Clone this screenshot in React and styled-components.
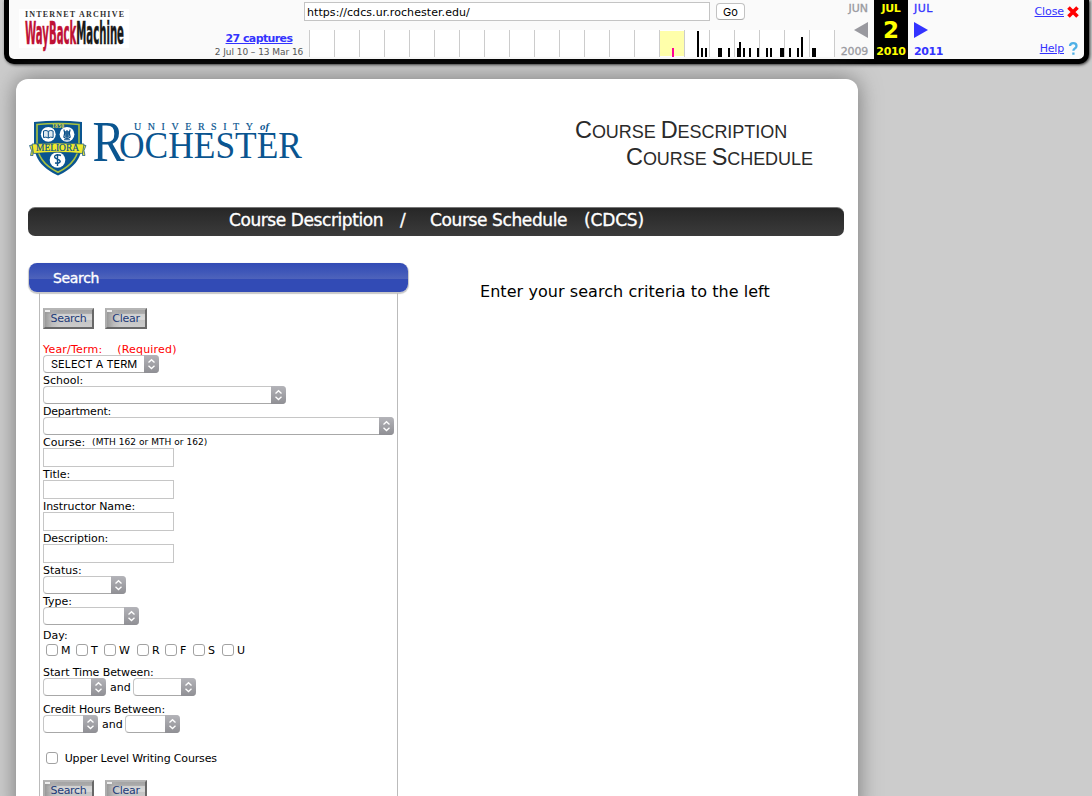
import React from "react";
import styled, { createGlobalStyle } from "styled-components";

const Global = createGlobalStyle`
  * { box-sizing: border-box; }
  html, body { margin: 0; padding: 0; }
  body { background: #ccc; width: 1092px; height: 796px; overflow: hidden; font-family: "DejaVu Sans", Verdana, sans-serif; font-size: 11px; color: #000; }
`;

const Page = styled.div`
  width: 1092px;
  height: 796px;
  overflow: hidden;
  display: flex;
  flex-direction: column;
  align-items: flex-start;
`;

const Text = styled.span`
  display: block;
  white-space: pre;
  line-height: ${(p) => p.$lh || 13}px;
  font-size: ${(p) => p.$size || 11}px;
  font-weight: ${(p) => (p.$bold ? 700 : 400)};
  color: ${(p) => p.$color || "inherit"};
  letter-spacing: ${(p) => p.$ls || 0}px;
  -webkit-text-stroke: ${(p) => p.$stroke || 0}px currentColor;
`;

const Link = styled.a`
  display: block;
  white-space: pre;
  color: #33f;
  text-decoration: underline;
  line-height: 13px;
  font-size: 11px;
  font-weight: ${(p) => (p.$bold ? 700 : 400)};
  letter-spacing: ${(p) => p.$ls || 0}px;
`;

/* ---------- archive toolbar ---------- */
const Toolbar = styled.header`
  flex: none;
  display: flex;
  align-items: flex-start;
  width: 1085px;
  height: 64px;
  margin-left: 4px;
  border: 5px solid #000;
  border-top: 0;
  border-radius: 0 0 10px 10px;
  background: #fafafa;
  box-shadow: 1px 1px 3px #333;
`;
const LogoBox = styled.div`
  width: 110px;
  height: 39px;
  margin: 9px 0 0 10px;
  background: #fff;
`;
const Captures = styled.div`
  width: 100px;
  margin: 32px 0 0 80px;
  display: flex;
  flex-direction: column;
  align-items: center;
`;
const Timeline = styled.div`
  width: 526px;
`;
const UrlRow = styled.div`
  display: flex;
  height: 30px;
  padding-top: 2px;
  margin-left: -5px;
`;
const UrlField = styled.div`
  width: 406px;
  height: 19px;
  border: 1px solid #c4c4c4;
  background: #fff;
  padding: 3px 0 0 2px;
`;
const GoButton = styled.div`
  width: 29px;
  height: 17px;
  margin: 1px 0 0 6px;
  border: 1px solid #c2c2c2;
  border-bottom-color: #aaa;
  border-radius: 4px;
  background: #fff;
  display: flex;
  justify-content: center;
  line-height: 17px;
  font-family: Inter, sans-serif;
`;
const Months = styled.div`
  display: flex;
  margin-left: 5px;
  height: 59px;
`;
const Month = styled.div`
  width: ${(p) => p.$w}px;
  height: 59px;
  padding: 2px ${(p) => p.$pr || 0}px 0 ${(p) => p.$pl || 0}px;
  display: flex;
  flex-direction: column;
  align-items: ${(p) => p.$align};
  background: ${(p) => p.$bg || "transparent"};
  color: ${(p) => p.$color};
`;
const MonthMark = styled.div`
  height: 30px;
  display: flex;
  align-items: center;
`;
const Actions = styled.div`
  width: 135px;
  height: 59px;
  padding: 5px 0 4px;
  display: flex;
  flex-direction: column;
  justify-content: space-between;
`;
const Action = styled.div`
  display: flex;
  justify-content: flex-end;
  align-items: center;
  gap: 3px;
  width: 135px;
`;

/* ---------- page panel ---------- */
const Panel = styled.main`
  flex: none;
  width: 842px;
  height: 740px;
  margin: 15px 0 0 16px;
  background: #fff;
  border-radius: 12px;
  box-shadow: 0 0 22px #777;
`;
const Banner = styled.div`
  display: flex;
  justify-content: space-between;
  height: 128px;
  padding-left: 12px;
`;
const Heading = styled.div`
  width: 283px;
  padding-top: 40px;
  font-family: "Liberation Sans", Arial, sans-serif;
  color: #2a2a2a;
`;
const HeadLine = styled.div`
  white-space: pre;
  font-size: 18px;
  line-height: 27px;
  padding-left: ${(p) => p.$x}px;
  letter-spacing: ${(p) => p.$ls}px;
`;
const Cap = styled.span`
  font-size: 23.5px;
  line-height: 20px;
`;
const TitleBar = styled.div`
  display: flex;
  width: 816px;
  height: 29px;
  margin-left: 12px;
  padding-left: 201px;
  border-top: 1px solid #777;
  border-radius: 7px;
  background: linear-gradient(#272727, #3b3b3b);
  color: #fff;
`;
const TitlePart = styled.div`
  width: ${(p) => p.$w}px;
`;
const Columns = styled.div`
  display: flex;
  margin-top: 26px;
`;
const SearchColumn = styled.section`
  width: 380px;
  margin-left: 13px;
`;
const SearchHead = styled.div`
  height: 29px;
  width: 379px;
  margin: 1px 0;
  padding: 2px 0 0 24px;
  border-radius: 8px;
  background: linear-gradient(#324bb5 0, #3f57b8 30%, #4e63bb 54%, #324bb5 55%, #324bb5 100%);
  box-shadow: 0 1px 1px 1px #c8c8c8;
`;
const Form = styled.div`
  width: 359px;
  height: 520px;
  margin: 1px 0 0 10px;
  padding: 15px 0 0 3px;
  border: solid #bbb;
  border-width: 0 1px;
`;
const Label = styled.div`
  display: flex;
  height: 13px;
  margin-top: ${(p) => p.$mt || 0}px;
  white-space: pre;
  line-height: 15px;
  letter-spacing: ${(p) => p.$ls || 0}px;
  color: ${(p) => p.$color || "#000"};
`;
const Buttons = styled.div`
  display: flex;
  gap: 11px;
  height: ${(p) => p.$h || 34}px;
`;
const BevelButton = styled.div`
  width: ${(p) => p.$w}px;
  height: 21px;
  border: 2px solid;
  border-color: #b5b5b5 #686868 #686868 #adadad;
  background:
    linear-gradient(#eee, #eee) 0 0 / 5px 2px no-repeat,
    linear-gradient(90deg, #999 0, rgba(180, 180, 180, 0.6) 7px, rgba(200, 200, 200, 0) 14px),
    linear-gradient(#a5a5a5 0, #aaa 20%, #d0d0d0 26%, #d9d9d9 55%, #c4c4c4 60%, #ccc 100%);
  color: #213a78;
  display: flex;
  justify-content: center;
  padding-top: 2px;
`;
const Row = styled.div`
  display: flex;
  align-items: center;
  height: ${(p) => p.$h}px;
  margin-top: ${(p) => p.$mt || 0}px;
  padding-left: ${(p) => p.$pl || 0}px;
`;
const And = styled.div`
  width: 27px;
  padding: 1px 0 0 4px;
  line-height: 15px;
`;
const SelectBox = styled.div`
  width: ${(p) => p.$w}px;
  height: 18px;
  border: 1px solid #c6c6c6;
  border-bottom-color: #a8a8a8;
  border-right: 0;
  border-radius: 4px;
  background: #fff;
  display: flex;
  justify-content: space-between;
  font-family: Inter, "Liberation Sans", sans-serif;
`;
const SelectValue = styled.span`
  padding-left: 7px;
  line-height: 17px;
  white-space: nowrap;
`;
const Stepper = styled.div`
  width: 15px;
  height: 18px;
  margin: -1px 0;
  border-radius: 0 4px 4px 0;
  background: linear-gradient(#b4b4b9, #8f8f94);
`;
const Field = styled.div`
  width: 131px;
  height: 19px;
  border: 1px solid #c6c6c6;
`;
const Check = styled.div`
  width: 12px;
  height: 12px;
  border: 1px solid #a2a2a2;
  border-radius: 3px;
  background: #fff;
`;
const Day = styled.div`
  display: flex;
  align-items: center;
  gap: 3px;
  width: ${(p) => p.$w}px;
`;
const Prompt = styled.div`
  padding: 20px 0 0 71px;
`;

const Select = ({ w, children }) => (
  <SelectBox $w={w}>
    <SelectValue>{children}</SelectValue>
    <Stepper>
      <svg width="15" height="18" fill="none" stroke="#fff" strokeWidth="1.3">
        <path d="M4.5 7.5 L7.5 4.7 L10.5 7.5 M4.5 10.7 L7.5 13.5 L10.5 10.7" />
      </svg>
    </Stepper>
  </SelectBox>
);

const BARS = [
  [697, 31, 2], [701, 48, 2], [705, 48, 2], [718, 48, 4], [728, 48, 2], [737, 48, 2], [739, 42, 2],
  [743, 48, 2], [749, 48, 2], [757, 48, 2], [766, 48, 2], [770, 48, 2], [780, 48, 4], [789, 48, 2],
  [797, 48, 2], [801, 37, 2], [812, 48, 4],
];

const ChartSvg = styled.svg`
  display: block;
`;

const Sparkline = () => (
  <ChartSvg width="526" height="27" viewBox="309 30 526 27" shapeRendering="crispEdges">
    <rect x="309" y="30" width="526" height="27" fill="#fff" />
    <rect x="660" y="31" width="24" height="25" fill="#ffa" />
    {Array.from({ length: 22 }, (_, i) => (
      <rect key={i} x={309 + i * 25} y="30" width="1" height="27" fill="#ccc" />
    ))}
    {BARS.map(([x, y, w]) => (
      <rect key={x} x={x} y={y} width={w} height={57 - y} fill="#000" />
    ))}
    <rect x="672" y="48" width="2" height="9" fill="#f09" />
  </ChartSvg>
);

const WaybackLogo = () => (
  <svg width="110" height="39" viewBox="19 9 110 39" overflow="visible">
    <text x="25" y="16.500" fontFamily="Liberation Serif, serif" fontSize="8" fontWeight="700" textLength="99" fill="#333">INTERNET ARCHIVE</text>
    <g transform="translate(25 43.500) scale(1 1.5)" fontFamily="Liberation Sans Narrow, DejaVu Sans Condensed, sans-serif" fontWeight="700" fontSize="21">
      <text x="0" y="0" textLength="99" lengthAdjust="spacingAndGlyphs" fill="#bf1135" strokeWidth=".3"><tspan stroke="#bf1135">WayBack</tspan><tspan fill="#1a1a1a" stroke="#1a1a1a">Machine</tspan></text>
    </g>
  </svg>
);

const RochesterLogo = () => (
  <svg width="280" height="100" viewBox="28 79 280 100" fontFamily="Liberation Serif, serif" fill="#0a5590">
    <path d="M34 122 Q58 119.500 82 122 V143 C82 160 72 169 58 175.500 C44 169 34 160 34 143 Z" />
    <path d="M37 124.500 Q58 122.500 79 124.500 V143 C79 158 70 166.500 58 172.200 C46 166.500 37 158 37 143 Z" fill="none" stroke="#a9c23f" strokeWidth="1.6" />
    <text x="52" y="127.500" fontSize="5.500" fontWeight="700" textLength="12" fill="#e6e24a">1850</text>
    <circle cx="48.300" cy="134.300" r="7.400" fill="#fff" />
    <circle cx="67" cy="134.300" r="7.400" fill="#fff" />
    <circle cx="57.500" cy="160" r="7.800" fill="#fff" />
    <path d="M43.500 131 Q46 129.700 48.300 131.300 Q50.600 129.700 53.100 131 V137.500 Q50.600 136.500 48.300 138 Q46 136.500 43.500 137.500 Z M48.300 131.300 V138" fill="#dfe9f0" stroke="#0a5089" strokeWidth="1" />
    <path d="M63.800 129.500 Q65.500 133 63.800 137 Q67 140 70.200 137 Q68.500 133 70.200 129.500 M65.800 131 V137 M67 130 V139 M68.200 131 V137 M64 139.700 H70" fill="none" stroke="#0a5089" strokeWidth="1.100" />
    <path d="M57.500 154 V166 M61 155.500 C56 153.500 52.500 156.500 56 158.500 C60 160 62 161.500 58 163.300 L55 163" fill="none" stroke="#0a5089" strokeWidth="1.400" />
    <path d="M29.500 145.500 L33 145 V155.500 L30.500 155.500 L31.500 150.500 Z M86 145.500 L82.500 145 V155.500 L85 155.500 L84 150.500 Z" fill="#e2df35" stroke="#0a5089" strokeWidth=".7" />
    <path d="M32 144 Q58 142 84 144 L82.500 153.500 Q58 150.800 33.500 153.500 Z" fill="#f0e92d" stroke="#0a5089" strokeWidth=".7" />
    <text x="36" y="151.300" fontSize="9.500" textLength="43" lengthAdjust="spacingAndGlyphs" stroke="#0a5089" strokeWidth=".2">MELIORA</text>
    <text x="134" y="129.900" fontSize="10" textLength="119" stroke="#0a5590" strokeWidth=".2">UNIVERSITY</text>
    <text x="260" y="129.900" fontSize="10" fontStyle="italic" fontWeight="700" textLength="9" lengthAdjust="spacingAndGlyphs">of</text>
    <text x="92.500" y="160.500" fontSize="56" textLength="32" lengthAdjust="spacingAndGlyphs">R</text>
    <text x="119" y="157.700" fontSize="37" textLength="183" lengthAdjust="spacingAndGlyphs">OCHESTER</text>
  </svg>
);

const DAYS = [["M", 30], ["T", 28], ["W", 33], ["R", 28], ["F", 28], ["S", 29], ["U", 28]];

const FormButtons = ({ h }) => (
  <Buttons $h={h}>
    <BevelButton $w={51}><Text $ls={-0.3}>Search</Text></BevelButton>
    <BevelButton $w={42}><Text $ls={-0.3}>Clear</Text></BevelButton>
  </Buttons>
);

export default function App() {
  return (
    <Page>
      <Global />
      <Toolbar>
        <LogoBox><WaybackLogo /></LogoBox>
        <Captures>
          <Link $bold $ls={-0.6}>27 captures</Link>
          <Text $size={9} $lh={14} $color="#555" $ls={-0.05}>2 Jul 10 – 13 Mar 16</Text>
        </Captures>
        <Timeline>
          <UrlRow>
            <UrlField><Text $ls={0.07}>https://cdcs.ur.rochester.edu/</Text></UrlField>
            <GoButton>Go</GoButton>
          </UrlRow>
          <Sparkline />
        </Timeline>
        <Months>
          <Month $w={34} $pr={6} $align="flex-end" $color="#99999f">
            <Text $stroke={0.3}>JUN</Text>
            <MonthMark><svg width="14" height="16"><path d="M0 8 L14 0 V16 Z" fill="#99999f" /></svg></MonthMark>
            <Text $stroke={0.3} $ls={-0.2}>2009</Text>
          </Month>
          <Month $w={34} $align="center" $bg="#000" $color="#ff0">
            <Text $bold $ls={-0.3}>JUL</Text>
            <MonthMark><Text $bold $size={23} $lh={28}>2</Text></MonthMark>
            <Text $bold $ls={-0.3}>2010</Text>
          </Month>
          <Month $w={36} $pl={6} $align="flex-start" $color="#33f">
            <Text $stroke={0.3} $ls={0.5}>JUL</Text>
            <MonthMark><svg width="14" height="16"><path d="M14 8 L0 0 V16 Z" fill="#33f" /></svg></MonthMark>
            <Text $bold $ls={-0.4}>2011</Text>
          </Month>
        </Months>
        <Actions>
          <Action>
            <Link $ls={-0.1}>Close</Link>
            <svg width="12" height="12" stroke="#f00" strokeWidth="3.600"><path d="M1.500 1.500 L10.500 10.500 M10.500 1.500 L1.500 10.500" /></svg>
          </Action>
          <Action>
            <Link $ls={-0.2}>Help</Link>
            <svg width="12" height="13"><path d="M3 4 Q3.200 1.200 6.200 1.200 Q9.500 1.200 9.500 4 Q9.500 5.500 7.800 6.500 Q6.400 7.300 6.400 8.800 M6.400 10.500 V12.700" fill="none" stroke="#4fb0e6" strokeWidth="2.300" /></svg>
          </Action>
        </Actions>
      </Toolbar>

      <Panel>
        <Banner>
          <RochesterLogo />
          <Heading>
            <HeadLine $x={0} $ls={-0.05}><Cap>C</Cap>OURSE <Cap>D</Cap>ESCRIPTION</HeadLine>
            <HeadLine $x={51} $ls={-0.05}><Cap>C</Cap>OURSE <Cap>S</Cap>CHEDULE</HeadLine>
          </Heading>
        </Banner>
        <TitleBar>
          <TitlePart $w={171}><Text $size={17} $lh={25} $ls={-0.42} $stroke={0.35}>Course Description</Text></TitlePart>
          <TitlePart $w={30}><Text $size={17} $lh={25} $stroke={0.35}>/</Text></TitlePart>
          <TitlePart $w={154}><Text $size={17} $lh={25} $ls={-0.38} $stroke={0.35}>Course Schedule</Text></TitlePart>
          <TitlePart $w={60}><Text $size={17} $lh={25} $ls={-0.15} $stroke={0.35}>(CDCS)</Text></TitlePart>
        </TitleBar>
        <Columns>
          <SearchColumn>
            <SearchHead><Text $size={14} $lh={27} $ls={-0.35} $color="#fff" $stroke={0.35}>Search</Text></SearchHead>
            <Form>
              <FormButtons />
              <Label $color="#f00" $ls={0.2}>{"Year/Term:    (Required)"}</Label>
              <Select w={116}>SELECT A TERM</Select>
              <Label>School:</Label>
              <Select w={243} />
              <Label $ls={-0.2}>Department:</Label>
              <Select w={351} />
              <Label>{"Course:  "}<Text $size={9} $lh={15} $ls={0.05}>(MTH 162 or MTH or 162)</Text></Label>
              <Field />
              <Label>Title:</Label>
              <Field />
              <Label $ls={-0.06}>Instructor Name:</Label>
              <Field />
              <Label $ls={-0.1}>Description:</Label>
              <Field />
              <Label>Status:</Label>
              <Select w={83} />
              <Label>Type:</Label>
              <Select w={96} />
              <Label $mt={3}>Day:</Label>
              <Row $h={16} $mt={1} $pl={3}>
                {DAYS.map(([d, w]) => (
                  <Day key={d} $w={w}><Check /><Text>{d}</Text></Day>
                ))}
              </Row>
              <Label $mt={7} $ls={-0.1}>Start Time Between:</Label>
              <Row $h={18}><Select w={63} /><And>and</And><Select w={63} /></Row>
              <Label $mt={6} $ls={-0.1}>Credit Hours Between:</Label>
              <Row $h={18}><Select w={55} /><And>and</And><Select w={55} /></Row>
              <Row $h={16} $mt={17} $pl={3}><Check /><Text $ls={-0.15}>{"  Upper Level Writing Courses"}</Text></Row>
              <Row $h={21} $mt={14}><FormButtons h={21} /></Row>
            </Form>
          </SearchColumn>
          <Prompt><Text $size={16} $lh={20} $ls={0.06}>Enter your search criteria to the left</Text></Prompt>
        </Columns>
      </Panel>
    </Page>
  );
}
